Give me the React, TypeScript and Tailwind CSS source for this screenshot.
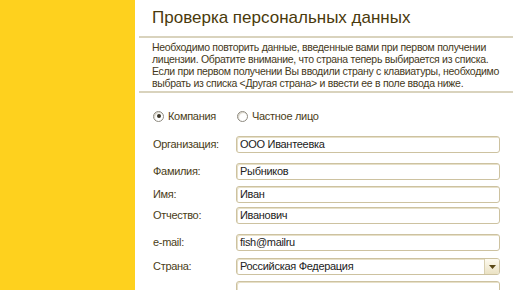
const font = { fontFamily: '"Liberation Sans", Arial, sans-serif' };

function Radio({ checked, label }: { checked?: boolean; label: string }) {
  return (
    <label className="flex items-center gap-[4px]">
      <span className="w-[11px] h-[11px] rounded-full border border-[#8e8a80] bg-white flex items-center justify-center shadow-[inset_1px_1px_1px_#d8d4c8]">
        {checked && <span className="w-[4px] h-[4px] rounded-full bg-[#3a3528]" />}
      </span>
      <span>{label}</span>
    </label>
  );
}

function Field({ label, value, select, className = '' }: { label: string; value: string; select?: boolean; className?: string }) {
  return (
    <div className={`flex items-center h-[17px] shrink-0 ${className}`}>
      <div className="w-[83px] shrink-0">{label}</div>
      <div className="w-[264px] h-[17px] flex items-stretch rounded-[3px] border border-[#cdc2a0] bg-white shadow-[inset_1px_1px_0_#e7e0c8] overflow-hidden">
        <div className="flex-1 pl-[3px] flex items-center text-[#222] truncate">{value}</div>
        {select && (
          <div className="w-[15px] flex items-center justify-center border-l border-[#d8cfb0] bg-gradient-to-b from-[#fdfaf0] to-[#ebe2c3]">
            <svg width="7" height="4" viewBox="0 0 7 4">
              <path d="M0 0h7L3.5 4z" fill="#5a4816" />
            </svg>
          </div>
        )}
      </div>
    </div>
  );
}

export default function App() {
  return (
    <div className="w-[516px] h-[290px] flex overflow-hidden bg-white text-[11px] tracking-[-0.3px] text-[#4a3d17] whitespace-nowrap" style={font}>
      {/* yellow side strip */}
      <div className="w-[135px] shrink-0 bg-[#fed11e]" />

      <div className="flex-1 min-w-0">
        <div className="h-[36px] flex items-center pl-[17px] text-[17px] tracking-normal text-[#4a3a0c]">
          Проверка персональных данных
        </div>
        <div className="ml-[4px] mr-[3px] h-[2px] bg-[#d9d3bd]" />

        <div className="pl-[17px] pt-[3px] pb-[2px] text-[10.5px] leading-[12px] text-[#45391a]">
          <div>Необходимо повторить данные, введенные вами при первом получении</div>
          <div>лицензии. Обратите внимание, что страна теперь выбирается из списка.</div>
          <div>Если при первом получении Вы вводили страну с клавиатуры, необходимо</div>
          <div>выбрать из списка &lt;Другая страна&gt; и ввести ее в поле ввода ниже.</div>
        </div>
        <div className="ml-[4px] mr-[3px] h-[2px] bg-[#d9d3bd]" />

        <div className="pl-[18px] flex flex-col">
          <div className="mt-[16px] h-[14px] flex items-center shrink-0">
            <div className="w-[84px]">
              <Radio checked label="Компания" />
            </div>
            <Radio label="Частное лицо" />
          </div>

          <Field className="mt-[13px]" label="Организация:" value="ООО Ивантеевка" />
          <Field className="mt-[10px]" label="Фамилия:" value="Рыбников" />
          <Field className="mt-[6px]" label="Имя:" value="Иван" />
          <Field className="mt-[4px]" label="Отчество:" value="Иванович" />
          <Field className="mt-[10px]" label="e-mail:" value="fish@mailru" />
          <Field className="mt-[7px]" label="Страна:" value="Российская Федерация" select />
          <Field className="mt-[6px]" label="" value="" />
        </div>
      </div>
    </div>
  );
}
